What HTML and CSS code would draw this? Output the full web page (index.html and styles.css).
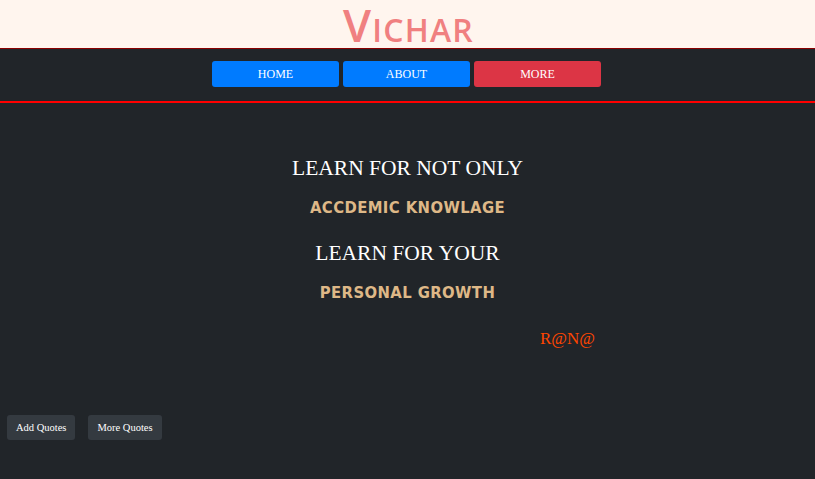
FILE: index.html
```html
<!DOCTYPE html>
<html>
<head>
<meta charset="utf-8">
<link rel="stylesheet" href="styles.css">
</head>
<body>
<header class="top">
  <h1 class="brand">Vichar</h1>
</header>
<nav class="nav">
  <a class="btn btn-blue">HOME</a>
  <a class="btn btn-blue">ABOUT</a>
  <a class="btn btn-red">MORE</a>
</nav>
<main class="quote">
  <p class="line">LEARN FOR NOT ONLY</p>
  <p class="accent">ACCDEMIC KNOWLAGE</p>
  <p class="line">LEARN FOR YOUR</p>
  <p class="accent">PERSONAL GROWTH</p>
  <p class="author">R@N@</p>
</main>
<div class="actions">
  <a class="small-btn">Add Quotes</a>
  <a class="small-btn">More Quotes</a>
</div>
</body>
</html>
```
FILE: styles.css
```css
html, body {
  margin: 0;
  padding: 0;
  background: #212529;
  height: 100%;
}
body {
  font-family: "Liberation Serif", "Times New Roman", serif;
  color: #fff;
}
.top {
  background: #fff5ee;
  height: 48px;
  border-bottom: 1px solid #8b0000;
  display: flex;
  justify-content: center;
  align-items: flex-start;
}
.brand {
  margin: 0;
  font-family: "Open Sans", sans-serif;
  font-variant: small-caps;
  font-weight: 600;
  font-size: 45px;
  line-height: 46px;
  padding-top: 2px;
  color: #f08080;
  letter-spacing: 1.2px;
  padding-left: 2px;
}
.nav {
  display: flex;
  justify-content: center;
  gap: 4px;
  padding: 12px 2px 14px 0;
  border-bottom: 2px solid #ff0000;
}
.btn {
  width: 127px;
  height: 26px;
  border-radius: 3px;
  display: flex;
  align-items: center;
  justify-content: center;
  font-size: 12px;
  color: #fff;
}
.btn-blue { background: #007bff; }
.btn-red { background: #dc3545; }
.quote {
  display: flex;
  flex-direction: column;
  align-items: center;
  padding-top: 52px;
}
.quote p { margin: 0; }
.line {
  font-size: 21.5px;
  line-height: 26px;
  height: 42px;
}
.accent {
  font-family: "DejaVu Sans Condensed", "DejaVu Sans", sans-serif;
  font-weight: bold;
  font-size: 16.5px;
  line-height: 22px;
  height: 43px;
  color: #deb887;
  letter-spacing: 0.4px;
}
.author {
  font-size: 17px;
  color: #ff4500;
  margin-left: 320px !important;
  margin-top: 4px !important;
}
.actions {
  display: flex;
  gap: 13px;
  padding-left: 7px;
  margin-top: 66px;
}
.small-btn {
  background: #343a40;
  height: 25px;
  padding: 0 9px;
  border-radius: 3px;
  display: flex;
  align-items: center;
  font-size: 10.5px;
  color: #fff;
}
```
